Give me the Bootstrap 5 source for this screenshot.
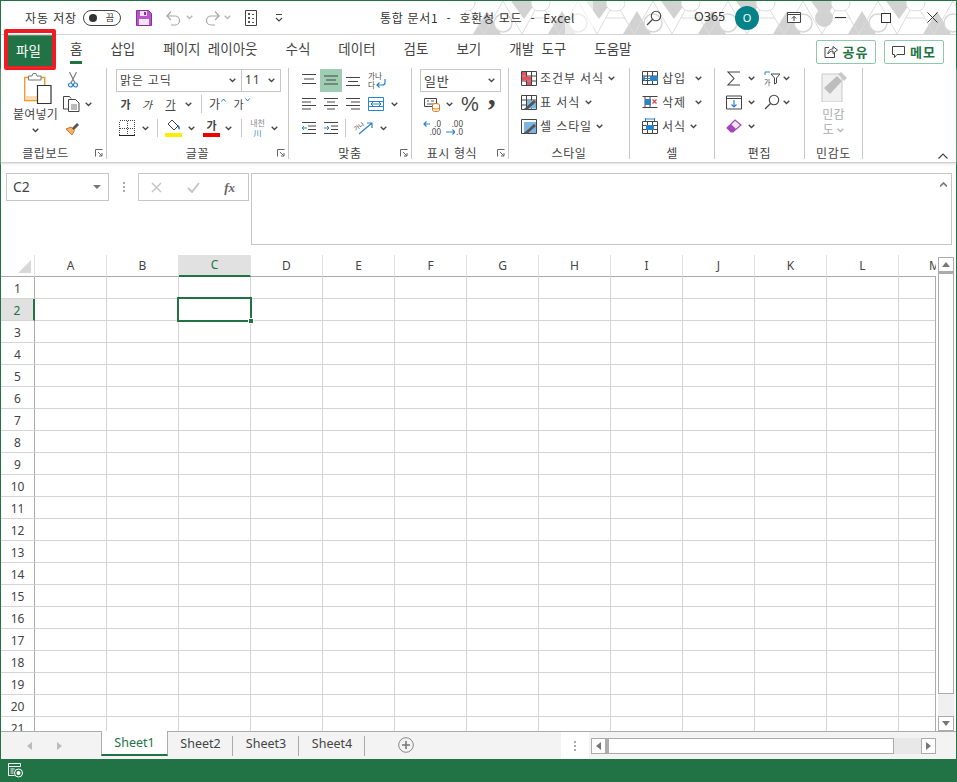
<!DOCTYPE html>
<html lang="ko">
<head>
  <meta charset="UTF-8" />
  <meta name="viewport" content="width=device-width, initial-scale=1" />
  <title>통합 문서1 - Excel</title>
  <link href="https://cdn.jsdelivr.net/npm/bootstrap@5.3.0/dist/css/bootstrap.min.css" rel="stylesheet" />
  <style>
    html, body { margin: 0; height: 782px; overflow: hidden; background: #fff; }
    body { font-family: "Noto Sans CJK KR", "Noto Sans", sans-serif; font-size: 12px; color: #444; line-height: 1; }
    svg { display: block; flex: none; }
    .xl-win { width: 957px; height: 782px; border: 1px solid #217346; border-bottom: 0; display: flex; flex-direction: column; }
    .xl-k { letter-spacing: .9px; white-space: nowrap; }

    /* small spacing helpers, px values from the picture */
    .ml-1 { margin-left: 1px; } .ml-2 { margin-left: 2px; } .ml-3 { margin-left: 3px; } .ml-4 { margin-left: 4px; } .ml-5 { margin-left: 5px; }
    .ml-6 { margin-left: 6px; } .ml-7 { margin-left: 7px; } .ml-8 { margin-left: 8px; } .ml-9 { margin-left: 9px; } .ml-10 { margin-left: 10px; }
    .ml-12 { margin-left: 12px; } .ml-14 { margin-left: 14px; } .ml-15 { margin-left: 15px; } .ml-18 { margin-left: 18px; } .ml-28 { margin-left: 28px; }
    .ml-34 { margin-left: 34px; } .ml-35 { margin-left: 35px; } .ml-36 { margin-left: 36px; }
    .mr-8 { margin-right: 8px; } .mr-9 { margin-right: 9px; } .mr-16 { margin-right: 16px; }
    .pl-8 { padding-left: 8px; } .pl-9 { padding-left: 9px; } .pl-11 { padding-left: 11px; } .pl-12 { padding-left: 12px; }
    .gap-3px { gap: 3px; } .gap-4px { gap: 4px; }
    .lh-row { height: 23.5px; }

    .xl-title { height: 34px; flex: none; border-bottom: 1px solid #d4d4d4; position: relative; color: #333; }
    .xl-pattern { position: absolute; left: 464px; top: 0; }
    .xl-title-row { position: relative; height: 33px; }
    .xl-auto { margin-left: 24px; width: 58px; }
    .xl-toggle { width: 38px; height: 16px; border: 1px solid #444; border-radius: 8px; padding: 0 6px 0 5px; font-size: 9px; flex: none; }
    .xl-dot { width: 8px; height: 8px; border-radius: 50%; background: #333; }
    .xl-doc { margin-left: 97px; width: 266px; letter-spacing: .7px; white-space: pre; flex: none; }
    .xl-acct { width: 41px; margin-left: 32px; font-family: "Noto Sans", sans-serif; font-size: 12.5px; flex: none; }
    .xl-avatar { width: 24px; height: 24px; border-radius: 50%; background: #038387; color: #fff; font-family: "Noto Sans", sans-serif; font-size: 11px; flex: none; }
    .xl-faint { opacity: .4; }

    .xl-tabs { height: 33px; flex: none; padding: 0 12px 0 0; }
    .xl-tab { height: 33px; padding: 0 14px 5px; font-size: 13.5px; word-spacing: 3.5px; color: #444; position: relative; white-space: nowrap; }
    .xl-tab.xl-on::after { content: ""; position: absolute; left: 14px; right: 14px; bottom: 4px; height: 3px; background: #217346; }
    .xl-file { width: 45px; height: 33px; background: #217346; color: #fff; margin-left: 7px; margin-right: 3px; padding: 0 4px 3px 0; font-size: 13.5px; border-top: 1px solid #5c9a78; flex: none; }
    .xl-red { position: absolute; left: 4px; top: 29px; width: 52px; height: 41px; border: 4px solid #ed1c24; border-radius: 2px; }
    .xl-share { width: 60px; height: 24px; border: 1px solid #8fc9a9; border-radius: 2px; color: #217346; font-weight: 700; font-size: 13px; letter-spacing: 1px; gap: 5px; background: #fff; flex: none; }

    .xl-ribbon { height: 95px; flex: none; border-bottom: 1px solid #cfcfcf; box-shadow: 0 1px 2px #ddd; position: relative; }
    .xl-grp { height: 91px; border-right: 1px solid #c8c8c8; display: flex; flex-direction: column; flex: none; }
    .xl-grp-body { height: 76px; flex: none; display: flex; }
    .xl-grp-body.xl-up { height: 78px; margin-top: -2px; }
    .xl-grp-label { position: relative; text-align: center; line-height: 18px; letter-spacing: .6px; height: 15px; color: #444; }
    .xl-launch { position: absolute; right: 3px; top: 5px; }
    .xl-g1 { width: 106px; } .xl-g2 { width: 182px; } .xl-g3 { width: 123px; } .xl-g4 { width: 97px; }
    .xl-g5 { width: 121px; } .xl-g6 { width: 85px; } .xl-g7 { width: 90px; } .xl-g8 { width: 58px; }
    .xl-r { height: 24px; display: flex; align-items: center; flex: none; }
    .xl-c { height: 24px; display: flex; align-items: center; justify-content: center; flex: none; }
    .xl-sep { width: 1px; height: 18px; background: #c8c8c8; flex: none; }
    .xl-combo { height: 23px; border: 1px solid #c6c6c6; padding: 0 5px 0 3px; background: #fff; flex: none; }
    .xl-combo-font { width: 126px; letter-spacing: .8px; }
    .xl-combo-size { width: 40px; margin-left: -1px; font-family: "Noto Sans", sans-serif; letter-spacing: 1px; }
    .xl-combo-num { width: 81px; font-size: 13px; }
    .xl-paste { width: 62px; padding-left: 10px; }
    .xl-paste-ico { margin: 5px 0 0 13px; }
    .xl-paste-txt { margin-top: 4px; width: 49px; letter-spacing: .2px; text-align: center; white-space: nowrap; }
    .xl-paste-chev { margin: 8px 0 0 21px; }
    .xl-w17 { width: 17px; } .xl-w19 { width: 19px; } .xl-w22 { width: 22px; } .xl-w23 { width: 23px; } .xl-w24 { width: 24px; }
    .xl-sel { background: #9fcdb3; height: 23px; }
    .xl-col { display: flex; flex-direction: column; flex: none; }
    .xl-b { font-weight: 700; font-size: 11px; }
    .xl-i { font-style: italic; font-size: 11px; }
    .xl-u { font-size: 11px; text-decoration: underline; }
    .xl-grow { font-size: 12px; }
    .xl-shrink { font-size: 11px; }
    .xl-caret { margin: -8px 0 0 1px; }
    .xl-swatch { height: 4px; margin-top: 1px; }
    .xl-yellow { background: #ffed00; }
    .xl-redbar { background: #e00; }
    .xl-fcolor { height: 13px; line-height: 13px; text-align: center; font-weight: 700; font-size: 11px; }
    .xl-phon { width: 19px; text-align: center; font-size: 8px; color: #888; line-height: 10px; }
    .xl-blue { color: #2a83c9; }
    .xl-ico { position: relative; flex: none; display: block; }
    .xl-ico svg { position: absolute; left: 0; top: 0; }
    .xl-tiny { font-size: 7.500px; line-height: 9px; color: #444; }
    .xl-wrapico { width: 19px; height: 18px; }
    .xl-wraptxt { width: 15px; }
    .xl-rotico { width: 20px; height: 14px; }
    .xl-rottxt { display: block; font-size: 6px; line-height: 7px; transform: rotate(-35deg); transform-origin: 3px 7px; padding-top: 3px; white-space: nowrap; }
    .xl-decico { width: 18px; height: 17px; font-family: "Noto Sans", sans-serif; font-size: 8px; line-height: 8px; text-align: right; color: #444; }
    .xl-sortico { width: 16px; height: 15px; }
    .xl-sorttxt { display: block; font-size: 7px; line-height: 8px; padding-top: 7px; }
    .xl-pct { font-family: "Liberation Sans", sans-serif; font-size: 20px; color: #444; }
    .xl-comma { font-family: "Liberation Serif", serif; font-weight: 700; font-size: 32px; line-height: 24px; height: 24px; color: #444; margin-bottom: 20px; }
    .xl-gray { color: #ababab; }
    .xl-sens-ico { margin-top: 4px; }
    .xl-sens-txt { width: 34px; margin-top: 4px; line-height: 15px; text-align: center; letter-spacing: .3px; }
    .xl-sens-chev { display: inline-block; margin-left: 3px; vertical-align: 1px; }
    .xl-collapse { position: absolute; right: 8px; bottom: 3px; }

    .xl-fbar { height: 92px; flex: none; padding: 10px 4px 0 5px; }
    .xl-box { border: 1px solid #c6c6c6; background: #fff; }
    .xl-name { width: 103px; height: 28px; padding: 0 7px 0 6px; font-family: "Noto Sans", sans-serif; font-size: 14px; color: #444; }
    .xl-vdots { width: 29px; height: 28px; gap: 2px; }
    .xl-pip { width: 2px; height: 2px; background: #aaa; }
    .xl-fxbox { width: 111px; height: 28px; padding: 0 13px 0 12px; margin-right: 2px; }
    .xl-fx { font-family: "Liberation Serif", serif; font-style: italic; font-weight: 700; font-size: 13px; color: #666; }
    .xl-fin { flex: 1; height: 72px; padding: 8px 4px 0 0; }

    .xl-main { height: 476px; flex: none; display: flex; }
    .xl-sheet { width: 935px; height: 476px; overflow: hidden; position: relative; flex: none; }
    .xl-sheet::after { content: ""; position: absolute; right: 0; top: 21px; bottom: 0; width: 1px; background: #ababab; }
    .xl-gridbox { display: grid; grid-template-columns: 34px repeat(13, 72px); grid-auto-rows: 22px; width: 970px; font-family: "Noto Sans", sans-serif; font-size: 12px; }
    .xl-hcell, .xl-rcell { display: flex; align-items: center; justify-content: center; color: #444; background: #fff; }
    .xl-hcell { border-right: 1px solid #e2e2e2; border-bottom: 1px solid #ababab; }
    .xl-rcell { border-right: 1px solid #ababab; border-bottom: 1px solid #d4d4d4; padding-top: 2px; }
    .xl-cell { border-right: 1px solid #d4d4d4; border-bottom: 1px solid #d4d4d4; }
    .xl-hcell.xl-act { background: #e1e1e1; color: #217346; border-bottom: 2px solid #217346; }
    .xl-rcell.xl-act { background: #e1e1e1; color: #217346; border-right: 2px solid #217346; }
    .xl-corner { border-right: 1px solid #e2e2e2; border-bottom: 1px solid #ababab; padding: 5px 0 0 17px; }
    .xl-cursor { position: absolute; left: 176px; top: 42px; width: 75px; height: 25px; border: 2px solid #217346; }
    .xl-handle { position: absolute; right: -4px; bottom: -4px; background: #217346; border: 1px solid #fff; box-sizing: content-box; width: 4px; height: 4px; }
    .xl-vbar { width: 20px; padding: 2px 2px 0 2px; background: #fff; flex: none; }
    .xl-sbtn { border: 1px solid #ababab; background: #fff; flex: none; }
    .xl-vbtn { height: 15px; }
    .xl-vthumb { height: 422px; border: 1px solid #ababab; border-top: 2px solid #ababab; background: #fff; flex: none; }
    .xl-vtrack { flex: 1; background: #f0f0f0; }

    .xl-sbar { height: 28px; flex: none; background: #f3f3f3; border-top: 1px solid #ababab; position: relative; }
    .xl-nav { width: 100px; height: 24px; padding-left: 26px; padding-top: 3px; gap: 25px; flex: none; }
    .xl-stab { height: 20px; margin-top: 4px; width: 66px; padding-left: 1px; font-family: "Noto Sans", sans-serif; font-size: 12.5px; color: #444; border-right: 1px solid #ababab; flex: none; padding-bottom: 3px; }
    .xl-stab.xl-next { width: 65px; }
    .xl-stab.xl-act { width: 67px; height: 25px; margin-top: -1px; background: #fff; color: #217346; border-left: 1px solid #ababab; border-right: 1px solid #ababab; border-bottom: 2px solid #217346; padding: 2px 0 0; }
    .xl-plus { margin-left: 33px; margin-top: 5px; }
    .xl-split { position: absolute; left: 560px; top: 0; width: 28px; height: 27px; background: #fff; gap: 2px; }
    .xl-hbar { position: absolute; left: 590px; top: 6px; width: 345px; height: 16px; }
    .xl-hbtn { width: 15px; }
    .xl-hthumb { width: 288px; border: 1px solid #ababab; border-left: 3px solid #ababab; background: #fff; flex: none; }
    .xl-htrack { flex: 1; background: #e8e8e8; }
    .xl-status { height: 23px; flex: 1; background: #217346; padding: 4px 0 0 8px; margin: 0 -1px; }
  </style>
</head>
<body>
<svg width="0" height="0" class="position-absolute">
  <defs>
    <symbol id="chev" viewBox="0 0 7 5"><path d="M.7.7 3.5 3.5 6.3.7" fill="none" stroke="#444" stroke-width="1.3"/></symbol>
    <symbol id="launch" viewBox="0 0 8 8"><path d="M.5 7.5V.5h7M3 3l4 4M7 4v3H4" fill="none" stroke="#666"/></symbol>
    <symbol id="lines-l" viewBox="0 0 16 14"><path d="M1 1.5h14M1 5h9M1 8.5h14M1 12h9" fill="none" stroke="#444"/></symbol>
    <symbol id="lines-c" viewBox="0 0 16 14"><path d="M1 1.5h14M4 5h8M1 8.5h14M4 12h8" fill="none" stroke="#444"/></symbol>
    <symbol id="lines-r" viewBox="0 0 16 14"><path d="M1 1.5h14M6 5h9M1 8.5h14M6 12h9" fill="none" stroke="#444"/></symbol>
    <symbol id="find" viewBox="0 0 16 16"><circle cx="10" cy="6" r="4.700" fill="none" stroke="#444" stroke-width="1.100"/><path d="M6.500 9.500 1 15" stroke="#444" stroke-width="1.300"/></symbol>
  </defs>
</svg>

<div class="xl-win">
  <!-- title bar -->
  <div class="xl-title">
    <svg class="xl-pattern" width="491" height="33" viewBox="0 0 491 33">
      <defs>
        <pattern id="hexes" width="75" height="33" patternUnits="userSpaceOnUse">
          <path d="M8 33 22 10 36 33zM46 0h26L59 18z" fill="#d2d2d2"/>
          <path d="M0 0 19 33M38 0 19 33M38 0 57 33M75 0 57 33M0 17h10M30 17h14M66 17h9" fill="none" stroke="#dcdcdc"/>
          <circle cx="38" cy="22" r="9" fill="#fff" stroke="#d6d6d6" stroke-width="1.5"/>
          <circle cx="2" cy="2" r="8" fill="#fff" stroke="#dcdcdc"/>
          <circle cx="74" cy="2" r="8" fill="#fff" stroke="#dcdcdc"/>
        </pattern>
      </defs>
      <rect width="491" height="33" fill="url(#hexes)"/>
      <circle cx="359" cy="17" r="9" fill="#d2d2d2"/>
      <rect x="100" y="0" width="28" height="33" fill="#fff" opacity=".55"/>
    </svg>
    <div class="xl-title-row d-flex align-items-center">
      <div class="xl-auto xl-k">자동 저장</div>
      <div class="xl-toggle d-flex align-items-center justify-content-between"><span class="xl-dot"></span><span>끔</span></div>
      <svg class="ml-15" width="16" height="16" viewBox="0 0 16 16"><path d="M.5.500h12l3 3v12H.5z" fill="#b657c8" stroke="#8a2d9e"/><path d="M4 1h7v5H4zM3 9h10v6H3z" fill="#f3e2f6"/><path d="M8 2h2v3H8z" fill="#8a2d9e"/></svg>
      <svg class="ml-14" width="15" height="16" viewBox="0 0 15 16"><path d="M1.500 6H9a4.500 4.500 0 0 1 0 9H5M5 1.500.9 6 5 10" fill="none" stroke="#a6a6a6" stroke-width="1.200"/></svg>
      <svg class="ml-5 xl-faint" width="7" height="5"><use href="#chev"/></svg>
      <svg class="ml-12" width="15" height="16" viewBox="0 0 15 16"><path d="M13.500 6H6a4.500 4.500 0 0 0 0 9h4M10 1.500 14.100 6 10 10" fill="none" stroke="#a6a6a6" stroke-width="1.200"/></svg>
      <svg class="ml-4 xl-faint" width="7" height="5"><use href="#chev"/></svg>
      <svg class="ml-14" width="12" height="16" viewBox="0 0 12 16"><path d="M.5.500h11v15H.5z" fill="#fff" stroke="#444"/><path d="M3 3h2v2H3zM7 4h2v1H7zM3 7h2v2H3zM7 8h2v1H7zM3 11h2v2H3zM7 12h2v1H7z" fill="#555"/></svg>
      <svg class="ml-18" width="8" height="8" viewBox="0 0 8 8"><path d="M1 .5h6M1 4l3 3 3-3" fill="none" stroke="#444" stroke-width="1.100"/></svg>
      <div class="xl-doc">통합 문서1  -  호환성 모드  -  Excel</div>
      <svg width="16" height="16"><use href="#find"/></svg>
      <div class="xl-acct">O365</div>
      <div class="xl-avatar d-flex align-items-center justify-content-center">O</div>
      <svg class="ml-28" width="14" height="11" viewBox="0 0 14 11"><path d="M.5 2.500h13v8H.5zM.5.500h13v2H.5z" fill="#fff" stroke="#444"/><path d="M7 9V4.500M4.800 6.500 7 4.300l2.200 2.200" fill="none" stroke="#444"/></svg>
      <svg class="ml-34" width="11" height="1"><rect width="11" height="1" fill="#333"/></svg>
      <svg class="ml-35" width="10" height="10"><rect x=".5" y=".5" width="9" height="9" fill="#fff" stroke="#333"/></svg>
      <svg class="ml-36" width="11" height="11" viewBox="0 0 11 11"><path d="M.5.500l10 10M10.500.5l-10 10" stroke="#333"/></svg>
    </div>
  </div>

  <!-- ribbon tabs -->
  <div class="xl-tabs d-flex align-items-center">
    <div class="xl-file d-flex align-items-center justify-content-center">파일</div>
    <div class="xl-tab xl-on d-flex align-items-center">홈</div>
    <div class="xl-tab d-flex align-items-center">삽입</div>
    <div class="xl-tab d-flex align-items-center">페이지 레이아웃</div>
    <div class="xl-tab d-flex align-items-center">수식</div>
    <div class="xl-tab d-flex align-items-center">데이터</div>
    <div class="xl-tab d-flex align-items-center">검토</div>
    <div class="xl-tab d-flex align-items-center">보기</div>
    <div class="xl-tab d-flex align-items-center">개발 도구</div>
    <div class="xl-tab d-flex align-items-center">도움말</div>
    <div class="xl-share ms-auto d-flex align-items-center justify-content-center">
      <svg width="14" height="13" viewBox="0 0 14 13"><path d="M5 2.500H1v10h9.500V8M4 9c0-4 3-5 5-5V1.500L13.500 5 9 8.500V6C7 6 5 7 4 9z" fill="none" stroke="#444"/></svg>공유
    </div>
    <div class="xl-share ms-2 d-flex align-items-center justify-content-center">
      <svg width="13" height="12" viewBox="0 0 13 12"><path d="M.5.500h12v8H5l-2.500 3v-3h-2z" fill="none" stroke="#444"/></svg>메모
    </div>
  </div>
  <div class="xl-red"></div>

  <!-- ribbon -->
  <div class="xl-ribbon d-flex">
    <div class="xl-grp xl-g1">
      <div class="xl-grp-body">
        <div class="xl-col xl-paste">
          <svg class="xl-paste-ico" width="28" height="31" viewBox="0 0 28 31"><path d="M.7 4.500h20v23H.7z" fill="#fff" stroke="#ed9d2f" stroke-width="1.400"/><path d="M2 23h12v4H2z" fill="#fbdcae"/><path d="M4.500 7V3H8l1-2.500h3L13 3h4v4z" fill="#fff" stroke="#777"/><path d="M13.500 12.500H27v18H13.500z" fill="#fff" stroke="#333" stroke-width="1.200"/></svg>
          <div class="xl-paste-txt">붙여넣기</div>
          <svg class="xl-paste-chev" width="7" height="5"><use href="#chev"/></svg>
        </div>
        <div class="xl-col">
          <div class="xl-c xl-w19"><svg width="10" height="16" viewBox="0 0 10 16"><path d="M1.500 0 7 11M8.500 0 3 11" stroke="#777" stroke-width="1.100"/><circle cx="2.500" cy="13" r="2" fill="none" stroke="#2a83c9" stroke-width="1.200"/><circle cx="7.500" cy="13" r="2" fill="none" stroke="#2a83c9" stroke-width="1.200"/></svg></div>
          <div class="xl-r"><svg width="17" height="16" viewBox="0 0 17 16"><path d="M6 13H.5V.5h6l1.500 2" fill="#fff" stroke="#444"/><path d="M5.500 3.500h7l3.500 3.500v8.500H5.500z" fill="#fff" stroke="#444"/><path d="M8 9h6M8 11h6M8 13h6" stroke="#777"/></svg><svg class="ml-5" width="7" height="5"><use href="#chev"/></svg></div>
          <div class="xl-c xl-w19"><svg width="16" height="15" viewBox="0 0 16 15"><path d="M1 8l6 6 2.500-4.500L6 6z" fill="#f6b26b" stroke="#d9731d"/><path d="M7 7l5-5 2 2-5 5z" fill="#555"/></svg></div>
        </div>
      </div>
      <div class="xl-grp-label"><span class="mr-16">클립보드</span><svg class="xl-launch" width="8" height="8"><use href="#launch"/></svg></div>
    </div>

    <div class="xl-grp xl-g2">
      <div class="xl-grp-body">
        <div class="xl-col pl-9">
          <div class="xl-r">
            <div class="xl-combo xl-combo-font d-flex align-items-center justify-content-between"><span>맑은 고딕</span><svg width="7" height="5"><use href="#chev"/></svg></div>
            <div class="xl-combo xl-combo-size d-flex align-items-center justify-content-between"><span>11</span><svg width="7" height="5"><use href="#chev"/></svg></div>
          </div>
          <div class="xl-r">
            <div class="xl-c xl-w19 xl-b">가</div>
            <div class="xl-c xl-w24 xl-i">가</div>
            <div class="xl-c xl-w23 xl-u">가</div>
            <svg class="ml-3 mr-9" width="7" height="5"><use href="#chev"/></svg>
            <div class="xl-sep"></div>
            <div class="xl-c ml-4 xl-w23 xl-grow">가<svg class="xl-caret" width="5" height="4" viewBox="0 0 5 4"><path d="M.5 3.500 2.500 1l2 2.500" fill="none" stroke="#2a83c9"/></svg></div>
            <div class="xl-c ml-1 xl-w23 xl-shrink">가<svg class="xl-caret" width="5" height="4" viewBox="0 0 5 4"><path d="M.5.500 2.500 3l2-2.500" fill="none" stroke="#2a83c9"/></svg></div>
          </div>
          <div class="xl-r">
            <svg class="ml-3" width="16" height="16" viewBox="0 0 16 16" shape-rendering="crispEdges"><path d="M.5.500h15v15H.5zM8 .5v15M.5 8h15" fill="none" stroke="#444" stroke-dasharray="1 1"/><path d="M0 15.500h16" stroke="#222"/></svg>
            <svg class="ml-7 mr-8" width="7" height="5"><use href="#chev"/></svg>
            <div class="xl-sep"></div>
            <div class="xl-col ml-7 xl-w17"><svg width="16" height="13" viewBox="0 0 16 13"><path d="M7 1l6 6-4 4-6-6z" fill="#fff" stroke="#444"/><path d="M13 6c2 1 2.500 4 1.500 4.500S12.500 8.500 13 6z" fill="#2a83c9"/></svg><div class="xl-swatch xl-yellow"></div></div>
            <svg class="ml-6" width="7" height="5"><use href="#chev"/></svg>
            <div class="xl-col ml-8 xl-w17"><div class="xl-fcolor">가</div><div class="xl-swatch xl-redbar"></div></div>
            <svg class="ml-5 mr-9" width="7" height="5"><use href="#chev"/></svg>
            <div class="xl-sep"></div>
            <div class="xl-phon ml-6">내천 <span class="xl-blue">川</span></div>
            <svg class="ml-4" width="7" height="5"><use href="#chev"/></svg>
          </div>
        </div>
      </div>
      <div class="xl-grp-label">글꼴<svg class="xl-launch" width="8" height="8"><use href="#launch"/></svg></div>
    </div>

    <div class="xl-grp xl-g3">
      <div class="xl-grp-body">
        <div class="xl-col pl-9">
          <div class="xl-r">
            <div class="xl-c xl-w22"><svg width="16" height="14" viewBox="0 0 16 14"><path d="M1 1.500h14M3 6h10M1 10.500h14" stroke="#444"/></svg></div>
            <div class="xl-c xl-w22 xl-sel"><svg width="16" height="14" viewBox="0 0 16 14"><path d="M1 3h14M3 7h10M1 11h14" stroke="#444"/></svg></div>
            <div class="xl-c xl-w22"><svg width="16" height="14" viewBox="0 0 16 14"><path d="M1 4.500h14M3 8.500h10M1 12.500h14" stroke="#444"/></svg></div>
            <div class="xl-ico xl-wrapico ml-4 xl-tiny"><div class="xl-wraptxt">가나다</div><svg width="19" height="18" viewBox="0 0 19 18"><path d="M17 8v4c0 2-2 2-3 2H9M11.500 11.500 9 14l2.500 2.500" fill="none" stroke="#2a83c9" stroke-width="1.200"/></svg></div>
          </div>
          <div class="xl-r">
            <div class="xl-c xl-w22"><svg width="16" height="14"><use href="#lines-l"/></svg></div>
            <div class="xl-c xl-w22"><svg width="16" height="14"><use href="#lines-c"/></svg></div>
            <div class="xl-c xl-w22"><svg width="16" height="14"><use href="#lines-r"/></svg></div>
            <svg class="ml-4" width="16" height="14" viewBox="0 0 16 14"><path d="M.5.500h15v13H.5zM.5 4.500h15M.5 9.500h15" fill="#fff" stroke="#2a83c9"/><path d="M3 7h10M5 5 3 7l2 2M11 5l2 2-2 2" fill="none" stroke="#2a83c9"/></svg>
            <svg class="ml-7" width="7" height="5"><use href="#chev"/></svg>
          </div>
          <div class="xl-r">
            <div class="xl-c xl-w22"><svg width="16" height="14" viewBox="0 0 16 14"><path d="M1 1.500h14M7 5h8M7 8.500h8M1 12.500h14" stroke="#444" fill="none"/><path d="M6 7H1M3 5 1 7l2 2" stroke="#2a83c9" fill="none"/></svg></div>
            <div class="xl-c xl-w22"><svg width="16" height="14" viewBox="0 0 16 14"><path d="M1 1.500h14M8 5h7M8 8.500h7M1 12.500h14" stroke="#444" fill="none"/><path d="M1 7h5M4 5l2 2-2 2" stroke="#2a83c9" fill="none"/></svg></div>
            <div class="xl-sep ml-3"></div>
            <div class="xl-ico xl-rotico ml-8"><span class="xl-rottxt">가나</span><svg width="20" height="14" viewBox="0 0 20 14"><path d="M5 13 18 2M13 2h5v5" fill="none" stroke="#2a83c9" stroke-width="1.200"/></svg></div>
            <svg class="ml-6" width="7" height="5"><use href="#chev"/></svg>
          </div>
        </div>
      </div>
      <div class="xl-grp-label">맞춤<svg class="xl-launch" width="8" height="8"><use href="#launch"/></svg></div>
    </div>

    <div class="xl-grp xl-g4">
      <div class="xl-grp-body">
        <div class="xl-col pl-8">
          <div class="xl-r"><div class="xl-combo xl-combo-num d-flex align-items-center justify-content-between"><span class="xl-k">일반</span><svg width="7" height="5"><use href="#chev"/></svg></div></div>
          <div class="xl-r">
            <svg class="ml-4" width="16" height="15" viewBox="0 0 16 15"><path d="M.5 1.500h12v8H.5z" fill="#fff" stroke="#444"/><path d="M3 4h2M7 4h3M3 7h7" stroke="#555"/><ellipse cx="12" cy="8" rx="3.500" ry="1.500" fill="#fff" stroke="#e3730e"/><path d="M8.500 8v5c0 2 7 2 7 0V8" fill="#fff" stroke="#e3730e"/><path d="M8.500 10.500c0 2 7 2 7 0" fill="none" stroke="#e3730e"/></svg>
            <svg class="ml-6" width="7" height="5"><use href="#chev"/></svg>
            <div class="xl-pct ml-8">%</div>
            <div class="xl-comma ml-9">,</div>
          </div>
          <div class="xl-r">
            <div class="xl-ico xl-decico ml-3">.0 .00<svg width="8" height="8" viewBox="0 0 8 8"><path d="M7 4H1M3.500 1.500 1 4l2.500 2.500" fill="none" stroke="#2a83c9" stroke-width="1.200"/></svg></div>
            <div class="xl-ico xl-decico ml-4">.00 .0<svg class="d-block" width="10" height="17" viewBox="0 0 10 17"><path d="M1 12h9M7.500 9.500 10 12l-2.500 2.500" fill="none" stroke="#2a83c9" stroke-width="1.200"/></svg></div>
          </div>
        </div>
      </div>
      <div class="xl-grp-label"><span class="mr-16">표시 형식</span><svg class="xl-launch" width="8" height="8"><use href="#launch"/></svg></div>
    </div>

    <div class="xl-grp xl-g5">
      <div class="xl-grp-body xl-up">
        <div class="xl-col pl-12">
          <div class="xl-r lh-row gap-3px">
            <svg width="16" height="15" viewBox="0 0 16 15"><path d="M.5.500h15v14H.5zM.5 5h15M.5 10h15M5.500.5v14M10.500.5v14" fill="#fff" stroke="#444"/><path d="M1 1h4v3.500H1zM1 5.500h9v4H1zM6 10.500h4v3.500H6z" fill="#e8505b"/></svg>
            <span class="xl-k">조건부 서식</span><svg class="ml-1" width="7" height="5"><use href="#chev"/></svg>
          </div>
          <div class="xl-r lh-row gap-3px">
            <svg width="16" height="15" viewBox="0 0 16 15"><path d="M.5.500h15v14H.5zM.5 5h15M.5 10h15M5.500.5v14M10.500.5v14" fill="#fff" stroke="#444"/><path d="M6 5.500h9v8H6z" fill="#7db5e2"/><path d="M3 14 13 5l2 2-9 8z" fill="#555"/></svg>
            <span class="xl-k">표 서식</span><svg class="ml-2" width="7" height="5"><use href="#chev"/></svg>
          </div>
          <div class="xl-r lh-row gap-3px">
            <svg width="16" height="15" viewBox="0 0 16 15"><path d="M.5.500h15v14H.5z" fill="#fff" stroke="#444"/><path d="M3 3h12v11H3z" fill="#7db5e2"/><path d="M3 14 13 5l2 2-9 8z" fill="#555"/></svg>
            <span class="xl-k">셀 스타일</span><svg class="ml-1" width="7" height="5"><use href="#chev"/></svg>
          </div>
        </div>
      </div>
      <div class="xl-grp-label">스타일</div>
    </div>

    <div class="xl-grp xl-g6">
      <div class="xl-grp-body xl-up">
        <div class="xl-col pl-12">
          <div class="xl-r lh-row gap-4px">
            <svg width="16" height="14" viewBox="0 0 16 14"><path d="M.5.500h15v13H.5zM.5 5h15M.5 9.500h15M5.500.5v13M10.500.5v13" fill="#fff" stroke="#444"/><path d="M8 5h8v5H8z" fill="#2a83c9"/><path d="M9 7.500H1M3.500 5 1 7.500 3.500 10" fill="none" stroke="#2a83c9" stroke-width="1.200"/></svg>
            <span class="xl-k">삽입</span><svg class="ml-5" width="7" height="5"><use href="#chev"/></svg>
          </div>
          <div class="xl-r lh-row gap-4px">
            <svg width="16" height="14" viewBox="0 0 16 14"><path d="M.5 1.500h15M.5 12.500h15M3 1.500v11M8 1.500v11" fill="none" stroke="#444"/><path d="M3 4h6v6H3z" fill="#2a83c9"/><path d="M10.500 4.500l4 4M14.500 4.500l-4 4" stroke="#e3434e" stroke-width="1.300"/></svg>
            <span class="xl-k">삭제</span><svg class="ml-5" width="7" height="5"><use href="#chev"/></svg>
          </div>
          <div class="xl-r lh-row gap-4px">
            <svg width="16" height="16" viewBox="0 0 16 16"><path d="M.5 3.500h15v12H.5zM.5 7.500h15M.5 11.500h15M5.500 3.500v12M10.500 3.500v12" fill="#fff" stroke="#444"/><path d="M4 7h8v5H4z" fill="#2a83c9"/><path d="M3.500 0v3M12.500 0v3M3.500 1h9" fill="none" stroke="#2a83c9"/></svg>
            <span class="xl-k">서식</span><svg width="7" height="5"><use href="#chev"/></svg>
          </div>
        </div>
      </div>
      <div class="xl-grp-label">셀</div>
    </div>

    <div class="xl-grp xl-g7">
      <div class="xl-grp-body xl-up">
        <div class="xl-col pl-11">
          <div class="xl-r lh-row">
            <svg width="16" height="15" viewBox="0 0 16 15"><path d="M14 1H2l6 6.500L2 14h12" fill="none" stroke="#444" stroke-width="1.100"/></svg>
            <svg class="ml-6" width="7" height="5"><use href="#chev"/></svg>
            <div class="xl-ico xl-sortico ml-9"><span class="xl-sorttxt">가</span><svg width="16" height="15" viewBox="0 0 16 15"><path d="M1 4V1h5" fill="none" stroke="#2a83c9"/><path d="M7 3h9l-3.500 4v5l-2 1V7z" fill="#fff" stroke="#444"/></svg></div>
            <svg class="ml-3" width="7" height="5"><use href="#chev"/></svg>
          </div>
          <div class="xl-r lh-row">
            <svg width="16" height="15" viewBox="0 0 16 15"><path d="M.5 1h15v13H.5z" fill="#fff" stroke="#444"/><path d="M0 3.500h16" stroke="#444"/><path d="M8 5v7M5.500 9.500 8 12l2.500-2.500" fill="none" stroke="#2a83c9" stroke-width="1.200"/></svg>
            <svg class="ml-6" width="7" height="5"><use href="#chev"/></svg>
            <svg class="ml-9" width="16" height="16"><use href="#find"/></svg>
            <svg class="ml-3" width="7" height="5"><use href="#chev"/></svg>
          </div>
          <div class="xl-r lh-row">
            <svg width="16" height="14" viewBox="0 0 16 14"><path d="M1 9l8-8 6 5-8 7H5z" fill="#f4e6f7" stroke="#a347ba" stroke-width="1.200"/><path d="M1 9l4-4 5 5-3 3H5z" fill="#a347ba"/></svg>
            <svg class="ml-6" width="7" height="5"><use href="#chev"/></svg>
          </div>
        </div>
      </div>
      <div class="xl-grp-label">편집</div>
    </div>

    <div class="xl-grp xl-g8">
      <div class="xl-grp-body">
        <div class="xl-col w-100 align-items-center xl-gray">
          <svg class="xl-sens-ico" width="26" height="30" viewBox="0 0 26 30"><path d="M1 2h20v28H1z" fill="#f0f0f0" stroke="#c8c8c8"/><path d="M3 16 16 4l5 5L9 22z" fill="#bdbdbd"/><path d="M17 2l3-2 6 6-3 3z" fill="#c8c8c8"/></svg>
          <div class="xl-sens-txt">민감 도<svg class="xl-sens-chev xl-faint" width="7" height="5"><use href="#chev"/></svg></div>
        </div>
      </div>
      <div class="xl-grp-label xl-k">민감도</div>
    </div>

    <svg class="xl-collapse" width="10" height="6" viewBox="0 0 10 6"><path d="M.5 5.500 5 1l4.500 4.500" fill="none" stroke="#444" stroke-width="1.200"/></svg>
  </div>

  <!-- formula bar -->
  <div class="xl-fbar d-flex align-items-start">
    <div class="xl-box xl-name d-flex align-items-center justify-content-between">C2<svg width="8" height="4"><path d="M0 0h8L4 4z" fill="#777"/></svg></div>
    <div class="xl-vdots d-flex flex-column align-items-center justify-content-center"><span class="xl-pip"></span><span class="xl-pip"></span><span class="xl-pip"></span></div>
    <div class="xl-box xl-fxbox d-flex align-items-center justify-content-between">
      <svg width="11" height="11" viewBox="0 0 11 11"><path d="M1 1l9 9M10 1l-9 9" stroke="#c6c6c6" stroke-width="1.500"/></svg>
      <svg width="13" height="11" viewBox="0 0 13 11"><path d="M1 6l4 4 7-9" fill="none" stroke="#c6c6c6" stroke-width="2"/></svg>
      <span class="xl-fx">fx</span>
    </div>
    <div class="xl-box xl-fin d-flex justify-content-end"><svg width="7" height="5" viewBox="0 0 7 5"><path d="M0 4.500 3.500 1 7 4.500" fill="none" stroke="#777" stroke-width="1.600"/></svg></div>
  </div>

  <!-- worksheet -->
  <div class="xl-main">
    <div class="xl-sheet">
      <div class="xl-gridbox" id="grid"></div>
      <div class="xl-cursor"><div class="xl-handle"></div></div>
    </div>
    <div class="xl-vbar d-flex flex-column">
      <div class="xl-sbtn xl-vbtn d-flex align-items-center justify-content-center"><svg width="8" height="5"><path d="M0 5h8L4 0z" fill="#777"/></svg></div>
      <div class="xl-vthumb"></div>
      <div class="xl-vtrack"></div>
      <div class="xl-sbtn xl-vbtn d-flex align-items-center justify-content-center"><svg width="8" height="5"><path d="M0 0h8L4 5z" fill="#777"/></svg></div>
    </div>
  </div>

  <!-- sheet tabs -->
  <div class="xl-sbar d-flex">
    <div class="xl-nav d-flex align-items-center">
      <svg width="5" height="8"><path d="M5 0v8L0 4z" fill="#bbb"/></svg>
      <svg width="5" height="8"><path d="M0 0v8l5-4z" fill="#bbb"/></svg>
    </div>
    <div class="xl-stab xl-act d-flex align-items-center justify-content-center">Sheet1</div>
    <div class="xl-stab xl-next d-flex align-items-center justify-content-center">Sheet2</div>
    <div class="xl-stab d-flex align-items-center justify-content-center">Sheet3</div>
    <div class="xl-stab d-flex align-items-center justify-content-center">Sheet4</div>
    <svg class="xl-plus" width="16" height="16" viewBox="0 0 16 16"><circle cx="8" cy="8" r="7.300" fill="none" stroke="#888"/><path d="M8 4v8M4 8h8" stroke="#777" stroke-width="1.600"/></svg>
    <div class="xl-split d-flex flex-column align-items-center justify-content-center"><span class="xl-pip"></span><span class="xl-pip"></span><span class="xl-pip"></span></div>
    <div class="xl-hbar d-flex">
      <div class="xl-sbtn xl-hbtn d-flex align-items-center justify-content-center"><svg width="5" height="8"><path d="M5 0v8L0 4z" fill="#777"/></svg></div>
      <div class="xl-hthumb"></div>
      <div class="xl-htrack"></div>
      <div class="xl-sbtn xl-hbtn d-flex align-items-center justify-content-center"><svg width="5" height="8"><path d="M0 0v8l5-4z" fill="#777"/></svg></div>
    </div>
  </div>

  <!-- status bar -->
  <div class="xl-status">
    <svg width="15" height="15" viewBox="0 0 15 15"><path d="M.5.500h12v3H.5zM.5 3.500v9h6" fill="none" stroke="#fff"/><path d="M2.500 6h4M2.500 8h3M2.500 10h3" stroke="#fff"/><circle cx="10.500" cy="10" r="4" fill="none" stroke="#fff"/><circle cx="10.500" cy="10" r="2" fill="#fff"/></svg>
  </div>
</div>

<script src="https://cdn.jsdelivr.net/npm/bootstrap@5.3.0/dist/js/bootstrap.bundle.min.js"></script>
<script>
const grid = document.getElementById('grid');
const letters = 'ABCDEFGHIJKLM'.split('');
const addDiv = (cls, text) => {
  const d = document.createElement('div');
  d.className = cls;
  if (text) d.textContent = text;
  grid.appendChild(d);
  return d;
};

const corner = addDiv('xl-corner');
corner.innerHTML = '<svg width="13" height="13"><path d="M13 0v13H0z" fill="#d8d8d8"/></svg>';
letters.forEach(l => addDiv('xl-hcell' + (l === 'C' ? ' xl-act' : ''), l));

for (let r = 1; r <= 21; r++) {
  addDiv('xl-rcell' + (r === 2 ? ' xl-act' : ''), String(r));
  letters.forEach(() => addDiv('xl-cell'));
}
</script>
</body>
</html>
